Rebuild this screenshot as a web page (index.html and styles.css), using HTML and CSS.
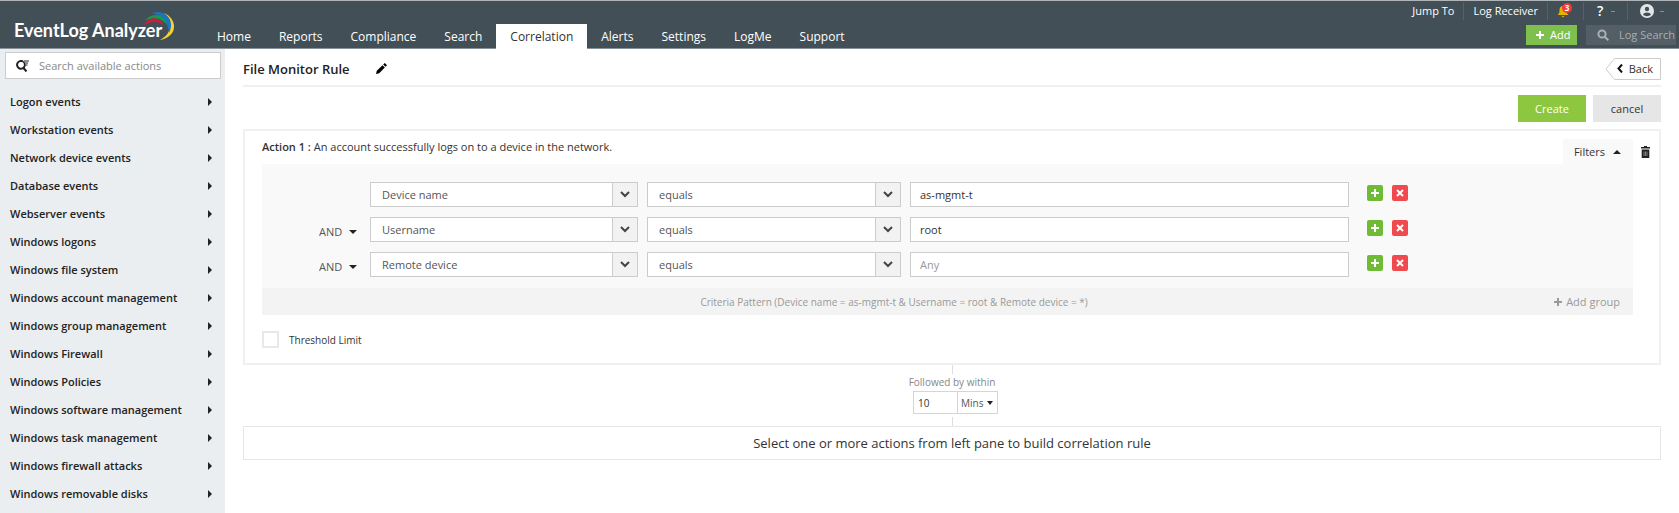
FILE: index.html
```
<!DOCTYPE html>
<html lang="en">
  <head>
    <meta charset="utf-8" />
    <title>EventLog Analyzer</title>
    <link rel="stylesheet" href="styles.css">
  </head>
  <body>
    <header class="header">
      <a href="#" class="logo">EventLog Analyzer
        <svg class="logo-arcs" width="32" height="30" viewBox="0 0 32 30">
          <path d="M20 2C34 8 34 26 16 29C28 23 29 11 20 2Z" fill="#fbd12e"/>
          <path d="M8 2C20 -2 32 8 25 22C24 11 18 4 8 2Z" fill="#1c75bc"/>
          <path d="M1 10C7 1 20 2 23 14C16 6 8 6 1 10Z" fill="#159a54"/>
          <path d="M0 15C4 5 15 5 20 14C13 10 6 10 0 15Z" fill="#c8203c"/>
        </svg>
      </a>
      <nav class="nav">
        <a href="#">Home</a>
        <a href="#">Reports</a>
        <a href="#">Compliance</a>
        <a href="#">Search</a>
        <a href="#" class="active">Correlation</a>
        <a href="#">Alerts</a>
        <a href="#">Settings</a>
        <a href="#">LogMe</a>
        <a href="#">Support</a>
      </nav>
      <div class="header-right">
        <div class="top-links">
          <a href="#">Jump To</a>
          <a href="#">Log Receiver</a>
          <button type="button" class="bell" aria-label="Notifications">
            <svg width="12" height="13" viewBox="0 0 12 13" fill="#e0b400"><path d="M6 1C3 1 2.500 3.500 2.500 6C2.500 8 1.500 9 0.500 10H11.500C10.500 9 9.500 8 9.500 6C9.500 3.500 9 1 6 1Z"/><path d="M4.500 11H7.500L6 12.500Z"/></svg>
            <span class="badge">3</span>
          </button>
          <button type="button" class="help" aria-label="Help">? <i class="dash"></i></button>
          <button type="button" class="user" aria-label="Account">
            <svg width="14" height="14" viewBox="0 0 14 14"><circle cx="7" cy="7" r="7" fill="#e3e6e8"/><circle cx="7" cy="5" r="2.200" fill="#434f57"/><path d="M3 10.500C4 7.800 10 7.800 11 10.500C9 12.700 5 12.700 3 10.500Z" fill="#434f57"/></svg>
            <i class="dash"></i>
          </button>
        </div>
        <div class="tools">
          <button type="button" class="add-btn">
            <svg width="8" height="8" viewBox="0 0 8 8" stroke="#fff" stroke-width="2"><path d="M4 0V8M0 4H8"/></svg>
            Add
          </button>
          <label class="log-search">
            <svg width="12" height="12" viewBox="0 0 12 12" fill="none" stroke="#a9b0b4" stroke-width="2"><circle cx="5" cy="5" r="3.600"/><path d="M7.700 7.700L11.300 11.300"/></svg>
            <input type="text" placeholder="Log Search" aria-label="Log Search">
          </label>
        </div>
      </div>
    </header>

    <div class="page">
      <aside class="sidebar">
        <label class="action-search">
          <svg width="13" height="12" viewBox="0 0 13 12" fill="none" stroke="#222" stroke-width="2"><path d="M7 1.500A3.900 3.900 0 1 0 8.700 6"/><path d="M7 7.500L10.500 11.500"/><path d="M8 1H13M9 3H12M9 5H11.500" stroke-width="1"/><path d="M8.700 6C8.900 4.500 8.500 2.500 7 1.500" stroke-width="1.500"/></svg>
          <input type="text" placeholder="Search available actions" aria-label="Search available actions">
        </label>
        <ul class="actions">
          <li><a href="#">Logon events</a></li>
          <li><a href="#">Workstation events</a></li>
          <li><a href="#">Network device events</a></li>
          <li><a href="#">Database events</a></li>
          <li><a href="#">Webserver events</a></li>
          <li><a href="#">Windows logons</a></li>
          <li><a href="#">Windows file system</a></li>
          <li><a href="#">Windows account management</a></li>
          <li><a href="#">Windows group management</a></li>
          <li><a href="#">Windows Firewall</a></li>
          <li><a href="#">Windows Policies</a></li>
          <li><a href="#">Windows software management</a></li>
          <li><a href="#">Windows task management</a></li>
          <li><a href="#">Windows firewall attacks</a></li>
          <li><a href="#">Windows removable disks</a></li>
        </ul>
      </aside>

      <main class="main">
        <div class="title-bar">
          <h1>File Monitor Rule</h1>
          <button type="button" class="edit" aria-label="Edit name">
            <svg width="11" height="11" viewBox="0 0 11 11"><path d="M0 11L0.800 7.800L6.500 2.200L8.800 4.500L3.200 10.200ZM7.200 1.500L8.700 0L11 2.300L9.500 3.800Z"/></svg>
          </button>
          <a href="#" class="back">
            <svg class="back-shape" width="56" height="22" viewBox="0 0 56 22" fill="#fff" stroke="#ccc"><path d="M9.500 0.500H55.500V21.500H9.500L1 11Z"/></svg>
            <svg class="back-arrow" width="6" height="9" viewBox="0 0 6 9" fill="none" stroke="#111" stroke-width="2"><path d="M5 0.500L1.500 4.500L5 8.500"/></svg>
            <span>Back</span>
          </a>
        </div>

        <div class="buttons">
          <button type="button" class="create">Create</button>
          <button type="button" class="cancel">cancel</button>
        </div>

        <section class="card">
          <div class="card-head">
            <p class="action-name"><b>Action 1 :</b> An account successfully logs on to a device in the network.</p>
            <button type="button" class="filters-tab">Filters <i class="caret-up"></i></button>
            <button type="button" class="trash" aria-label="Delete action">
              <svg width="9" height="12" viewBox="0 0 9 12" fill="#222"><path d="M3 0H6V1H9V2.500H0V1H3ZM0.700 3.500H8.300V12H0.700Z"/><path d="M3 5.500V10M4.500 5.500V10M6 5.500V10" stroke="#aaa" stroke-width="0.700"/></svg>
            </button>
          </div>

          <div class="filters">
            <div class="rows">
              <div class="row">
                <span></span>
                <div class="select"><select aria-label="Field 1"><option>Device name</option></select><svg viewBox="0 0 10 7"><path d="M1 1L5 5L9 1"/></svg></div>
                <div class="select"><select aria-label="Condition 1"><option>equals</option></select><svg viewBox="0 0 10 7"><path d="M1 1L5 5L9 1"/></svg></div>
                <input type="text" class="value" value="as-mgmt-t" aria-label="Value 1">
                <div class="row-btns">
                  <button type="button" class="plus" aria-label="Add filter"><svg viewBox="0 0 8 8"><path d="M4 0V8M0 4H8"/></svg></button>
                  <button type="button" class="remove" aria-label="Remove filter"><svg viewBox="0 0 8 8"><path d="M1 1L7 7M7 1L1 7"/></svg></button>
                </div>
              </div>
              <div class="row">
                <div class="operator"><select aria-label="Operator 2"><option>AND</option></select><i class="caret-down"></i></div>
                <div class="select"><select aria-label="Field 2"><option>Username</option></select><svg viewBox="0 0 10 7"><path d="M1 1L5 5L9 1"/></svg></div>
                <div class="select"><select aria-label="Condition 2"><option>equals</option></select><svg viewBox="0 0 10 7"><path d="M1 1L5 5L9 1"/></svg></div>
                <input type="text" class="value" value="root" aria-label="Value 2">
                <div class="row-btns">
                  <button type="button" class="plus" aria-label="Add filter"><svg viewBox="0 0 8 8"><path d="M4 0V8M0 4H8"/></svg></button>
                  <button type="button" class="remove" aria-label="Remove filter"><svg viewBox="0 0 8 8"><path d="M1 1L7 7M7 1L1 7"/></svg></button>
                </div>
              </div>
              <div class="row">
                <div class="operator"><select aria-label="Operator 3"><option>AND</option></select><i class="caret-down"></i></div>
                <div class="select"><select aria-label="Field 3"><option>Remote device</option></select><svg viewBox="0 0 10 7"><path d="M1 1L5 5L9 1"/></svg></div>
                <div class="select"><select aria-label="Condition 3"><option>equals</option></select><svg viewBox="0 0 10 7"><path d="M1 1L5 5L9 1"/></svg></div>
                <input type="text" class="value" placeholder="Any" aria-label="Value 3">
                <div class="row-btns">
                  <button type="button" class="plus" aria-label="Add filter"><svg viewBox="0 0 8 8"><path d="M4 0V8M0 4H8"/></svg></button>
                  <button type="button" class="remove" aria-label="Remove filter"><svg viewBox="0 0 8 8"><path d="M1 1L7 7M7 1L1 7"/></svg></button>
                </div>
              </div>
            </div>
            <div class="pattern">
              <span class="pattern-text">Criteria Pattern (Device name = as-mgmt-t &amp; Username = root &amp; Remote device = *)</span>
              <button type="button" class="add-group">
                <svg width="8" height="8" viewBox="0 0 8 8" stroke="#999" stroke-width="2"><path d="M4 0V8M0 4H8"/></svg>
                Add group
              </button>
            </div>
          </div>

          <label class="threshold"><input type="checkbox"> Threshold Limit</label>
        </section>

        <div class="followed">
          <label for="within">Followed by within</label>
          <div class="within">
            <input type="text" id="within" value="10">
            <div class="unit"><select aria-label="Unit"><option>Mins</option></select><i class="caret-down"></i></div>
          </div>
        </div>

        <div class="next-action">Select one or more actions from left pane to build correlation rule</div>
      </main>
    </div>
  </body>
</html>
```
FILE: styles.css
```
* {
  box-sizing: border-box;
}
body {
  margin: 0;
  font-family: "Open Sans", sans-serif;
  font-size: 11px;
  line-height: 16px;
  color: #333;
  background: #fff;
  min-height: 100vh;
  display: flex;
  flex-direction: column;
}
a {
  color: inherit;
  text-decoration: none;
}
button, input, select {
  font: inherit;
  color: inherit;
  margin: 0;
  padding: 0;
  border: none;
  border-radius: 0;
  background: none;
}
select {
  appearance: none;
  width: 100%;
}
svg {
  flex: none;
}

/* header */
.header {
  display: flex;
  height: 49px;
  background: #434f57;
  border-top: 1px solid #aeb4b8;
  border-bottom: 1px solid #8b9297;
}
.logo {
  position: relative;
  width: 203px;
  padding: 18px 0 0 14px;
  font-family: Lato, sans-serif;
  font-size: 18px;
  font-weight: 700;
  line-height: 22px;
  color: #fff;
}
.logo-arcs {
  position: absolute;
  left: 144px;
  top: 10px;
}
.nav {
  display: flex;
  align-items: flex-end;
  font-size: 12px;
  color: #fff;
}
.nav a {
  padding: 5px 14px 0;
  height: 24px;
}
.nav .active {
  background: #fff;
  color: #333;
  height: 25px;
  margin-bottom: -1px;
}
.header-right {
  margin-left: auto;
  display: flex;
  flex-direction: column;
  color: #fff;
}
.top-links {
  display: flex;
  height: 24px;
  padding-top: 1px;
  align-items: flex-start;
  justify-content: flex-end;
}
.top-links > * {
  padding: 0 9px;
  height: 18px;
  display: flex;
  align-items: center;
  border-left: 1px solid #56626a;
}
.top-links > :first-child {
  border-left: none;
}
.top-links .bell {
  position: relative;
  width: 36px;
}
.badge {
  position: absolute;
  left: 14px;
  top: 1px;
  width: 10px;
  height: 10px;
  border-radius: 5px;
  background: #f03a3a;
  font-size: 8px;
  font-weight: 700;
  line-height: 10px;
}
.top-links .help {
  width: 44px;
  padding-left: 13px;
  gap: 8px;
  font-size: 14px;
  font-weight: 600;
}
.top-links .user {
  width: 52px;
  padding-left: 12px;
  gap: 6px;
}
.dash {
  width: 4px;
  height: 1px;
  background: #8b9297;
}
.tools {
  display: flex;
  justify-content: flex-end;
  gap: 9px;
  padding-right: 3px;
}
.add-btn {
  display: flex;
  align-items: center;
  gap: 6px;
  width: 51px;
  height: 20px;
  padding-left: 10px;
  background: #7fbf4d;
}
.log-search {
  display: flex;
  align-items: center;
  gap: 10px;
  width: 90px;
  height: 20px;
  padding-left: 11px;
  background: #535e66;
}
.log-search input {
  width: 57px;
}
.log-search input::placeholder {
  color: #a9b0b4;
}

/* sidebar */
.page {
  display: flex;
  flex: 1;
}
.sidebar {
  width: 225px;
  flex: none;
  padding: 3px 4px 0 5px;
  background: #eaeef0;
}
.action-search {
  display: flex;
  align-items: center;
  gap: 10px;
  height: 27px;
  padding-left: 10px;
  border: 1px solid #ccc;
  background: #fff;
}
.action-search input {
  flex: 1;
}
::placeholder {
  color: #888;
  opacity: 1;
}
.actions {
  list-style: none;
  margin: 9px 0 0;
  padding: 0;
}
.actions a {
  display: flex;
  align-items: center;
  justify-content: space-between;
  height: 28px;
  padding: 0 9px 0 5px;
  font-weight: 600;
  color: #222;
}
.actions a::after {
  content: "";
  border: 4px solid transparent;
  border-left-color: #222;
  border-right: none;
}

/* main */
.main {
  flex: 1;
  padding: 3px 18px 20px;
}
.title-bar {
  display: flex;
  align-items: center;
  height: 35px;
  border-bottom: 2px solid #f0f0f0;
}
h1 {
  margin: 0;
  font-size: 13px;
  font-weight: 600;
  color: #222;
}
.edit {
  display: flex;
  margin-left: 26px;
}
.back {
  position: relative;
  display: flex;
  align-items: center;
  gap: 6px;
  height: 22px;
  margin-left: auto;
  padding: 0 8px 0 13px;
}
.back-shape {
  position: absolute;
  right: 0;
  top: 0;
}
.back-arrow, .back span {
  position: relative;
}
.buttons {
  display: flex;
  justify-content: flex-end;
  gap: 7px;
  padding: 8px 0 7px;
}
.buttons button {
  width: 68px;
  height: 27px;
}
.create {
  background: #8dc63f;
  color: #fff;
}
.cancel {
  background: #e6e6e6;
}
.card {
  padding: 8px 26px 15px 17px;
  border: 2px solid #f0f0f0;
}
.card-head {
  display: flex;
  height: 25px;
}
.action-name {
  flex: 1;
  margin: 0;
}
.action-name b {
  font-weight: 600;
}
.filters-tab {
  display: flex;
  align-items: center;
  gap: 8px;
  padding: 0 12px 0 11px;
  background: #f9f9f9;
}
.caret-up {
  border: 4px solid transparent;
  border-top: none;
  border-bottom-color: #222;
}
.caret-down {
  border: 4px solid transparent;
  border-bottom: none;
  border-top-color: #222;
}
.trash {
  width: 17px;
  margin-right: -17px;
  padding-left: 8px;
  display: flex;
  align-items: center;
}
.rows {
  display: flex;
  flex-direction: column;
  gap: 10px;
  padding: 18px 0 11px;
  background: #f9f9f9;
}
.row {
  display: grid;
  grid-template-columns: 99px 268fr 254fr 439fr 275px;
  gap: 9px;
  height: 25px;
}
.select {
  position: relative;
}
.select select {
  height: 25px;
  padding-left: 11px;
  border: 1px solid #ccc;
  background: linear-gradient(90deg, #ccc 1px, #f2f2f2 1px) right / 25px 100% no-repeat #fff;
  color: #555;
}
.select svg {
  position: absolute;
  right: 8px;
  top: 9px;
  width: 10px;
  height: 7px;
  fill: none;
  stroke: #444;
  stroke-width: 2;
  pointer-events: none;
}
.value {
  padding-left: 9px;
  border: 1px solid #ccc;
  background: #fff;
  min-width: 0;
}
.value::placeholder {
  color: #999;
}
.operator {
  display: flex;
  align-items: center;
  justify-content: flex-end;
  gap: 5px;
  padding: 5px 4px 0 0;
  color: #555;
}
.operator select {
  width: 25px;
}
.row-btns {
  display: flex;
  gap: 9px;
  padding: 3px 0 0 9px;
}
.row-btns button {
  display: flex;
  align-items: center;
  justify-content: center;
  width: 16px;
  height: 16px;
  border-radius: 2px;
}
.row-btns svg {
  width: 8px;
  height: 8px;
  stroke: #fff;
  stroke-width: 2;
}
.plus {
  background: #6fbb35;
}
.remove {
  background: #f0494e;
}
.pattern {
  display: flex;
  align-items: center;
  height: 27px;
  padding-right: 13px;
  background: #f3f3f3;
  color: #999;
}
.pattern-text {
  flex: 1;
  padding-right: 28px;
  font-size: 10px;
  text-align: center;
}
.add-group {
  display: flex;
  align-items: center;
  gap: 4px;
}
.threshold {
  display: flex;
  align-items: center;
  gap: 10px;
  margin-top: 16px;
  font-size: 10px;
}
.threshold input {
  appearance: none;
  width: 17px;
  height: 17px;
  border: 2px solid #e8e8e8;
  background: #fff;
}
.followed {
  display: flex;
  flex-direction: column;
  align-items: center;
  font-size: 10px;
  color: #888;
}
.followed::before, .followed::after {
  content: "";
  width: 1px;
  height: 9px;
  background: #ddd;
}
.within {
  display: flex;
  height: 23px;
  margin: 1px 0 3px 7px;
  border: 1px solid #d5d5d5;
}
.within input {
  width: 43px;
  padding-left: 4px;
  color: #333;
}
.unit {
  display: flex;
  align-items: center;
  width: 40px;
  padding: 0 4px 0 3px;
  border-left: 1px solid #d5d5d5;
  color: #555;
}
.unit .caret-down {
  border-width: 4px 3px 0;
}
.next-action {
  padding: 8px;
  border: 1px solid #e6e6e6;
  font-size: 13px;
  text-align: center;
}
```
